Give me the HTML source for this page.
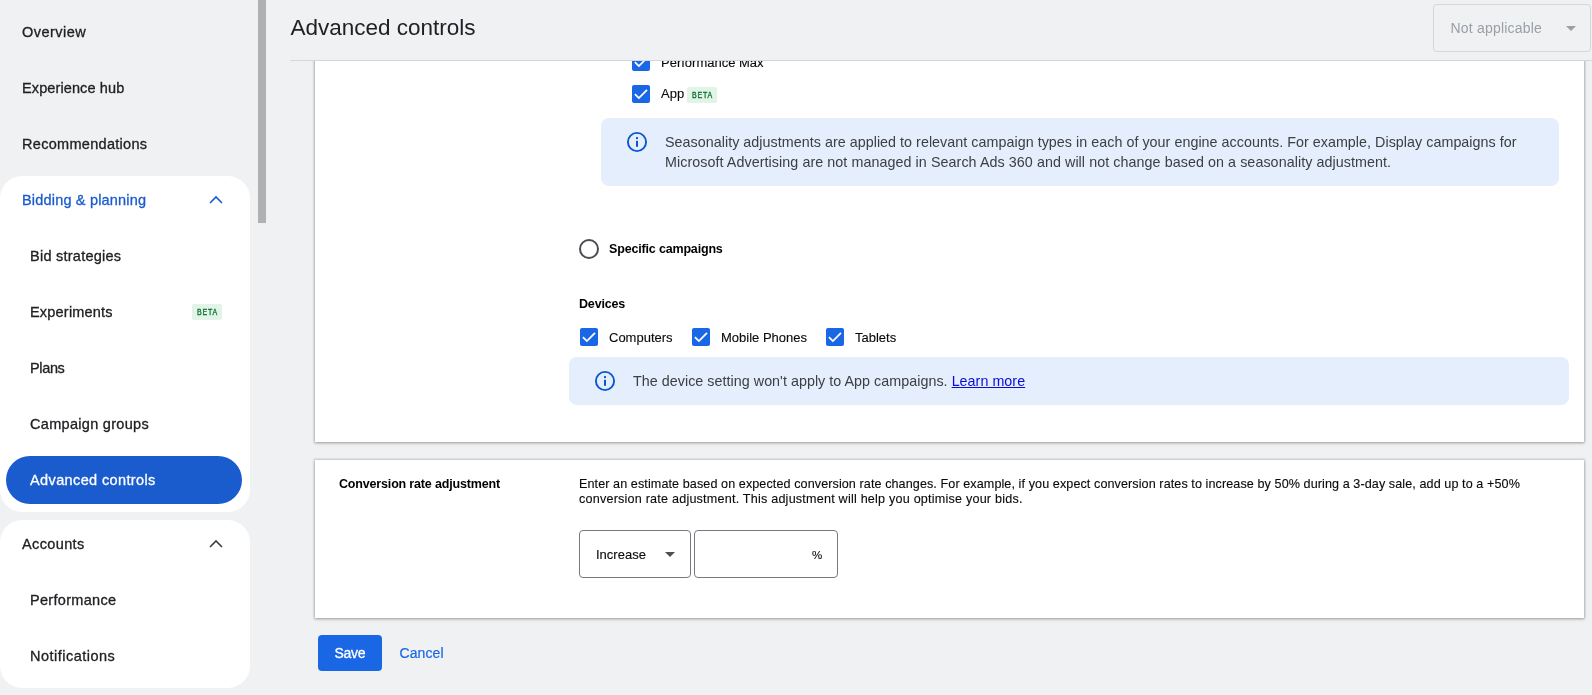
<!DOCTYPE html>
<html><head><meta charset="utf-8">
<style>
*{box-sizing:border-box;margin:0;padding:0}
html,body{width:1592px;height:695px;overflow:hidden;background:#f0f1f3;font-family:"Liberation Sans",sans-serif;color:#202124}
.abs{position:absolute}
#side{position:absolute;left:0;top:0;width:258px;height:695px;background:#f0f1f3}
.nav{position:absolute;left:22px;font-size:14.5px;color:#202124;letter-spacing:.3px;-webkit-text-stroke:.3px currentColor;white-space:nowrap;line-height:20px}
.nav.sub{left:30px}
.grp{position:absolute;left:0;width:250px;background:#fff;border-radius:22px}
.sel{position:absolute;left:6px;top:456px;width:236px;height:48px;border-radius:24px;background:#1a5bcd}
.beta{position:absolute;background:#e2f3e8;color:#137333;font-size:8.4px;font-weight:normal;-webkit-text-stroke:.35px #137333;border-radius:2px;text-align:center}
.beta span{display:inline-block;position:relative;top:-1px;transform:scaleX(.84);letter-spacing:.9px;margin-right:-.9px}
#sb{position:absolute;left:258px;top:0;width:8px;height:223px;background:#b0b2b1}
.card{position:absolute;background:#fff;box-shadow:0 1px 3px 0 rgba(60,64,67,.35),0 0 2px 1px rgba(60,64,67,.2)}
.cb{position:absolute;width:18px;height:18px;border-radius:2px;background:#1a67e6}
.cb svg{position:absolute;left:0;top:0}
.t13{position:absolute;font-size:13px;line-height:16px;white-space:nowrap;color:#0a0a0a;-webkit-text-stroke:.12px #0a0a0a}
.info{position:absolute;background:#e5eefc;border-radius:8px}
.infot{position:absolute;font-size:14.3px;line-height:20px;color:#3c4043;white-space:nowrap;letter-spacing:.04px}
#wrap{position:absolute;left:0;top:0;width:1592px;height:695px;will-change:transform}
</style></head><body>
<div id="wrap">
<div id="side">
  <div class="nav" style="top:22px;letter-spacing:0.46px">Overview</div>
  <div class="nav" style="top:78px;letter-spacing:0.11px">Experience hub</div>
  <div class="nav" style="top:134px">Recommendations</div>
  <div class="grp" style="top:176px;height:336px"></div>
  <div class="nav" style="top:190px;color:#1a5bcd;letter-spacing:0.18px">Bidding &amp; planning</div>
  <svg class="abs" style="left:206px;top:190px" width="20" height="20" viewBox="0 0 20 20"><path d="M4 13 L10 7 L16 13" fill="none" stroke="#1a5bcd" stroke-width="1.6"/></svg>
  <div class="nav sub" style="top:246px;letter-spacing:0.25px">Bid strategies</div>
  <div class="nav sub" style="top:302px;letter-spacing:0.2px">Experiments</div>
  <div class="beta" style="left:192px;top:304px;width:30px;height:16px;line-height:18px"><span>BETA</span></div>
  <div class="nav sub" style="top:358px;letter-spacing:-0.36px">Plans</div>
  <div class="nav sub" style="top:414px">Campaign groups</div>
  <div class="sel"></div>
  <div class="nav sub" style="top:470px;color:#fff;letter-spacing:0.38px">Advanced controls</div>
  <div class="grp" style="top:520px;height:168px"></div>
  <div class="nav" style="top:534px;letter-spacing:0.37px">Accounts</div>
  <svg class="abs" style="left:206px;top:534px" width="20" height="20" viewBox="0 0 20 20"><path d="M4 13 L10 7 L16 13" fill="none" stroke="#3c4043" stroke-width="1.6"/></svg>
  <div class="nav sub" style="top:590px">Performance</div>
  <div class="nav sub" style="top:646px;letter-spacing:0.49px">Notifications</div>
</div>
<div id="sb"></div>

<!-- cards -->
<div class="card" style="left:315px;top:40px;width:1269px;height:402px"></div>
<div class="card" style="left:315px;top:460px;width:1269px;height:158px"></div>

<!-- card 1 content -->
<div class="cb" style="left:632px;top:53px"><svg width="18" height="18" viewBox="0 0 18 18"><path d="M2.9 9.1 L6.9 13.1 L15 4.9" fill="none" stroke="#fff" stroke-width="1.75"/></svg></div>
<div class="t13" style="left:661px;top:55px">Performance Max</div>
<div class="cb" style="left:632px;top:85px"><svg width="18" height="18" viewBox="0 0 18 18"><path d="M2.9 9.1 L6.9 13.1 L15 4.9" fill="none" stroke="#fff" stroke-width="1.75"/></svg></div>
<div class="t13" style="left:661px;top:86px">App</div>
<div class="beta" style="left:687px;top:87px;width:30px;height:16px;line-height:18px"><span>BETA</span></div>

<div class="info" style="left:601px;top:118px;width:958px;height:68px"></div>
<svg class="abs" style="left:626px;top:131px" width="22" height="22" viewBox="0 0 22 22"><circle cx="11" cy="11" r="9.1" fill="none" stroke="#0b57d0" stroke-width="1.9"/><rect x="10" y="9.8" width="2" height="6" fill="#0b57d0"/><rect x="10" y="6.1" width="2" height="2" fill="#0b57d0"/></svg>
<div class="infot" style="left:665px;top:132px">Seasonality adjustments are applied to relevant campaign types in each of your engine accounts. For example, Display campaigns for<br><span style="letter-spacing:.07px">Microsoft Advertising are not managed in Search Ads 360 and will not change based on a seasonality adjustment.</span></div>

<div class="abs" style="left:579px;top:239px;width:20px;height:20px;border-radius:50%;border:2px solid #4a4e53"></div>
<div class="t13" style="left:609px;top:241px;font-weight:bold;font-size:12.5px;letter-spacing:-.17px;color:#000;-webkit-text-stroke:0">Specific campaigns</div>

<div class="t13" style="left:579px;top:296px;font-weight:bold;font-size:12.5px;letter-spacing:-.17px;color:#000;-webkit-text-stroke:0">Devices</div>
<div class="cb" style="left:580px;top:328px"><svg width="18" height="18" viewBox="0 0 18 18"><path d="M2.9 9.1 L6.9 13.1 L15 4.9" fill="none" stroke="#fff" stroke-width="1.75"/></svg></div>
<div class="t13" style="left:609px;top:330px">Computers</div>
<div class="cb" style="left:692px;top:328px"><svg width="18" height="18" viewBox="0 0 18 18"><path d="M2.9 9.1 L6.9 13.1 L15 4.9" fill="none" stroke="#fff" stroke-width="1.75"/></svg></div>
<div class="t13" style="left:721px;top:330px">Mobile Phones</div>
<div class="cb" style="left:826px;top:328px"><svg width="18" height="18" viewBox="0 0 18 18"><path d="M2.9 9.1 L6.9 13.1 L15 4.9" fill="none" stroke="#fff" stroke-width="1.75"/></svg></div>
<div class="t13" style="left:855px;top:330px">Tablets</div>

<div class="info" style="left:569px;top:357px;width:1000px;height:48px"></div>
<svg class="abs" style="left:594px;top:370px" width="22" height="22" viewBox="0 0 22 22"><circle cx="11" cy="11" r="9.1" fill="none" stroke="#0b57d0" stroke-width="1.9"/><rect x="10" y="9.8" width="2" height="6" fill="#0b57d0"/><rect x="10" y="6.1" width="2" height="2" fill="#0b57d0"/></svg>
<div class="infot" style="left:633px;top:371px">The device setting won't apply to App campaigns. <span style="color:#0b0bd8;text-decoration:underline">Learn more</span></div>

<!-- header (covers card top) -->
<div class="abs" style="left:266px;top:0;width:1326px;height:60px;background:#f0f1f3"></div>
<div class="abs" style="left:290px;top:60px;width:1302px;height:1px;background:#d5d7da"></div>
<div class="abs" style="left:290.4px;top:13px;font-size:22.5px;line-height:30px;color:#202124;white-space:nowrap">Advanced controls</div>
<div class="abs" style="left:1433px;top:4px;width:158px;height:48px;border:1px solid #d5d7da;border-radius:4px"></div>
<div class="abs" style="left:1450.5px;top:19px;font-size:14px;line-height:18px;color:#9aa0a6;white-space:nowrap;letter-spacing:.2px">Not applicable</div>
<svg class="abs" style="left:1566px;top:26px" width="10" height="6" viewBox="0 0 10 6"><path d="M0 0 L10 0 L5 5Z" fill="#9aa0a6"/></svg>

<!-- card 2 content -->
<div class="t13" style="left:339px;top:476px;font-weight:bold;font-size:12.5px;letter-spacing:-.17px;color:#000;-webkit-text-stroke:0">Conversion rate adjustment</div>
<div class="t13" style="left:579px;top:477px;line-height:15px;font-size:12.6px;letter-spacing:.085px">Enter an estimate based on expected conversion rate changes. For example, if you expect conversion rates to increase by 50% during a 3-day sale, add up to a +50%<br><span style="letter-spacing:.21px">conversion rate adjustment. This adjustment will help you optimise your bids.</span></div>
<div class="abs" style="left:579px;top:530px;width:112px;height:48px;border:1px solid #757a80;border-radius:4px"></div>
<div class="t13" style="left:596px;top:547px">Increase</div>
<svg class="abs" style="left:665px;top:552px" width="10" height="6" viewBox="0 0 10 6"><path d="M0 0 L10 0 L5 5Z" fill="#4d5156"/></svg>
<div class="abs" style="left:694px;top:530px;width:144px;height:48px;border:1px solid #757a80;border-radius:4px"></div>
<div class="t13" style="left:812px;top:547px;font-size:11.5px">%</div>

<div class="abs" style="left:318px;top:635px;width:64px;height:36px;background:#1a67e6;border-radius:4px"></div>
<div class="abs" style="left:334.5px;top:644px;font-size:14px;line-height:18px;color:#fff;letter-spacing:-.3px;-webkit-text-stroke:.3px #fff">Save</div>
<div class="abs" style="left:399.5px;top:644px;font-size:14px;line-height:18px;color:#1a67e6;letter-spacing:.1px;-webkit-text-stroke:.2px #1a67e6">Cancel</div>
</div>
</body></html>
